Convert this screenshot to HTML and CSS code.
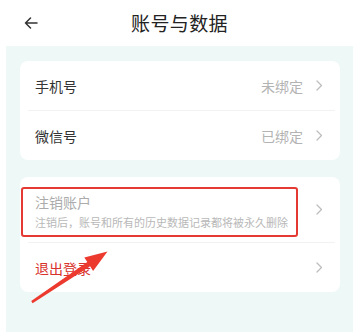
FILE: index.html
```html
<!DOCTYPE html>
<html lang="zh">
<head>
<meta charset="utf-8">
<link rel="stylesheet" href="styles.css">
</head>
<body>
<div class="page">
  <header class="topbar">
    <svg class="back" width="14" height="12" viewBox="0 0 14 12"><path d="M13 6H1.5M6.5 1L1.5 6l5 5" fill="none" stroke="#333" stroke-width="1.5" stroke-linecap="round" stroke-linejoin="round"/></svg>
    <h1 class="title">账号与数据</h1>
  </header>
  <main class="content">
    <section class="card">
      <div class="row">
        <span class="label">手机号</span>
        <span class="value">未绑定</span>
        <svg class="chev" width="7" height="11" viewBox="0 0 7 11"><path d="M1 1l4.5 4.5L1 10" fill="none" stroke="#bdbdbd" stroke-width="1.3" stroke-linecap="round" stroke-linejoin="round"/></svg>
      </div>
      <div class="divider"></div>
      <div class="row">
        <span class="label">微信号</span>
        <span class="value">已绑定</span>
        <svg class="chev" width="7" height="11" viewBox="0 0 7 11"><path d="M1 1l4.5 4.5L1 10" fill="none" stroke="#bdbdbd" stroke-width="1.3" stroke-linecap="round" stroke-linejoin="round"/></svg>
      </div>
    </section>
    <section class="card">
      <div class="row tall">
        <div class="stack">
          <span class="label muted">注销账户</span>
          <span class="sub">注销后，账号和所有的历史数据记录都将被永久删除</span>
        </div>
        <svg class="chev" width="7" height="11" viewBox="0 0 7 11"><path d="M1 1l4.5 4.5L1 10" fill="none" stroke="#bdbdbd" stroke-width="1.3" stroke-linecap="round" stroke-linejoin="round"/></svg>
        <div class="highlight"></div>
      </div>
      <div class="divider"></div>
      <div class="row">
        <span class="label danger">退出登录</span>
        <svg class="chev" width="7" height="11" viewBox="0 0 7 11"><path d="M1 1l4.5 4.5L1 10" fill="none" stroke="#bdbdbd" stroke-width="1.3" stroke-linecap="round" stroke-linejoin="round"/></svg>
      </div>
    </section>
  </main>
  <svg class="pointer" width="359" height="332" viewBox="0 0 359 332"><polygon points="31.2,301 87.3,262.1 84.3,257.5 107.5,251.5 93.1,270.9 90.1,266.3 32.6,303.2" fill="#ec3a2e"/></svg>
</div>
</body>
</html>
```
FILE: styles.css
```css
html, body {
  margin: 0;
  padding: 0;
  background: #ffffff;
}
body {
  font-family: "Noto Sans CJK SC", "Noto Sans", sans-serif;
}
.page {
  position: relative;
  width: 359px;
  height: 332px;
  overflow: hidden;
  display: flex;
  flex-direction: column;
}
.topbar {
  height: 46px;
  flex: none;
  display: flex;
  align-items: center;
  justify-content: center;
  position: relative;
}
.back {
  position: absolute;
  left: 24px;
  top: 17px;
}
.title {
  margin: 0;
  font-size: 19px;
  font-weight: 400;
  color: #222;
  line-height: 24px;
  letter-spacing: 0.4px;
}
.content {
  flex: 1;
  margin: 0 6px;
  background: #eef9f7;
  padding: 15px 13px 0 14px;
  display: flex;
  flex-direction: column;
  gap: 17px;
}
.card {
  background: #ffffff;
  border-radius: 8px;
  display: flex;
  flex-direction: column;
}
.row {
  position: relative;
  height: 49px;
  display: flex;
  align-items: center;
  padding: 0 17px 0 15px;
}
.row.tall {
  height: 65px;
}
.label {
  font-size: 14px;
  color: #333;
  line-height: 18px;
  flex: 1;
}
.value {
  font-size: 14px;
  color: #b3b3b3;
  line-height: 18px;
  margin-right: 13px;
}
.chev {
  flex: none;
  display: block;
}
.stack {
  flex: 1;
  display: flex;
  flex-direction: column;
  margin-top: 3px;
}
.muted {
  color: #ababab;
}
.sub {
  font-size: 11px;
  line-height: 14px;
  color: #b8b8b8;
  margin-top: 4px;
  white-space: nowrap;
}
.danger {
  color: #d8322c;
}
.divider {
  height: 1px;
  background: #f2f2f2;
  margin: 0 5px 0 8px;
}
.highlight {
  position: absolute;
  left: 1px;
  top: 10px;
  width: 277px;
  height: 50px;
  box-sizing: border-box;
  border: 2px solid #e53a33;
  border-radius: 3px;
}
.pointer {
  position: absolute;
  left: 0;
  top: 0;
  pointer-events: none;
}
```
